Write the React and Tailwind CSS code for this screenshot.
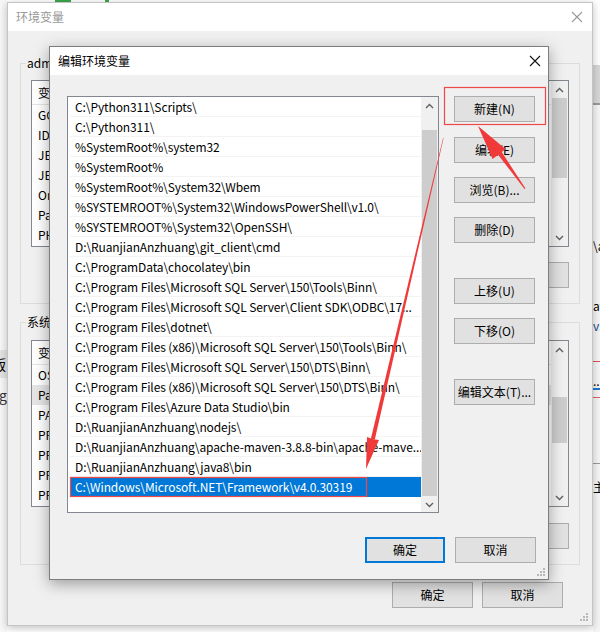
import React from "react";

const FONT = "font-['Noto_Sans_CJK_SC','Noto_Sans',sans-serif]";

const paths = [
  "C:\\Python311\\Scripts\\",
  "C:\\Python311\\",
  "%SystemRoot%\\system32",
  "%SystemRoot%",
  "%SystemRoot%\\System32\\Wbem",
  "%SYSTEMROOT%\\System32\\WindowsPowerShell\\v1.0\\",
  "%SYSTEMROOT%\\System32\\OpenSSH\\",
  "D:\\RuanjianAnzhuang\\git_client\\cmd",
  "C:\\ProgramData\\chocolatey\\bin",
  "C:\\Program Files\\Microsoft SQL Server\\150\\Tools\\Binn\\",
  "C:\\Program Files\\Microsoft SQL Server\\Client SDK\\ODBC\\17...",
  "C:\\Program Files\\dotnet\\",
  "C:\\Program Files (x86)\\Microsoft SQL Server\\150\\Tools\\Binn\\",
  "C:\\Program Files\\Microsoft SQL Server\\150\\DTS\\Binn\\",
  "C:\\Program Files (x86)\\Microsoft SQL Server\\150\\DTS\\Binn\\",
  "C:\\Program Files\\Azure Data Studio\\bin",
  "D:\\RuanjianAnzhuang\\nodejs\\",
  "D:\\RuanjianAnzhuang\\apache-maven-3.8.8-bin\\apache-mave...",
  "D:\\RuanjianAnzhuang\\java8\\bin",
];
const selectedPath = "C:\\Windows\\Microsoft.NET\\Framework\\v4.0.30319";

const userVars = ["GOPATH", "IDEA_HOME", "JENKINS_HOME", "JETBRAINS", "OneDrive", "Path", "PHP_HOME"];
const sysVars = ["OS", "Path", "PATHEXT", "PROCESSOR_ARCHITECTURE", "PROCESSOR_IDENTIFIER", "PROCESSOR_LEVEL", "PROCESSOR_REVISION"];

function Btn({ children, className = "", primary = false }) {
  return (
    <div
      className={`flex items-center justify-center h-[26px] bg-[#e1e1e1] text-[12px] text-black leading-none ${
        primary ? "border-2 border-[#0078d7]" : "border border-[#adadad]"
      } ${className}`}
    >
      {children}
    </div>
  );
}

function ChevUp() {
  return (
    <svg width="9" height="6" viewBox="0 0 9 6">
      <path d="M1 5 L4.5 1.5 L8 5" fill="none" stroke="#606060" strokeWidth="1.4" />
    </svg>
  );
}
function ChevDown() {
  return (
    <svg width="9" height="6" viewBox="0 0 9 6">
      <path d="M1 1 L4.5 4.5 L8 1" fill="none" stroke="#606060" strokeWidth="1.4" />
    </svg>
  );
}

function Scrollbar({ thumbTop, thumbHeight }) {
  return (
    <div className="w-[17px] h-full flex flex-col bg-[#f0f0f0]">
      <div className="h-[17px] flex items-center justify-center shrink-0">
        <ChevUp />
      </div>
      <div className="flex-1 relative">
        <div className="mx-[1px] bg-[#cdcdcd]" style={{ marginTop: thumbTop, height: thumbHeight }} />
      </div>
      <div className="h-[17px] flex items-center justify-center shrink-0">
        <ChevDown />
      </div>
    </div>
  );
}

function Grip() {
  return (
    <svg width="10" height="10" viewBox="0 0 10 10">
      <rect x="7" y="1" width="2" height="2" fill="#b8b8b8" />
      <rect x="4" y="4" width="2" height="2" fill="#b8b8b8" />
      <rect x="7" y="4" width="2" height="2" fill="#b8b8b8" />
      <rect x="1" y="7" width="2" height="2" fill="#b8b8b8" />
      <rect x="4" y="7" width="2" height="2" fill="#b8b8b8" />
      <rect x="7" y="7" width="2" height="2" fill="#b8b8b8" />
    </svg>
  );
}

function VarList({ vars, highlight, thumbTop, thumbHeight }) {
  return (
    <div className="h-[167px] border border-[#828790] bg-white flex">
      <div className="flex-1 flex flex-col overflow-hidden">
        <div className="h-[24px] flex items-center pl-[6px] text-[12px] text-black border-b border-[#e5e5e5]">
          <span className="w-[120px]">变量</span>
          <span>值</span>
        </div>
        {vars.map((v, i) => (
          <div
            key={i}
            className={`h-[20px] flex items-center pl-[6px] text-[12px] text-black whitespace-nowrap ${
              highlight === i ? "bg-[#e5e5e5]" : ""
            }`}
          >
            {v}
          </div>
        ))}
      </div>
      <Scrollbar thumbTop={thumbTop} thumbHeight={thumbHeight} />
    </div>
  );
}

function CloseX({ color, size }) {
  return (
    <svg width={size} height={size} viewBox="0 0 12 12">
      <path d="M1 1 L11 11 M11 1 L1 11" stroke={color} strokeWidth="1.1" fill="none" />
    </svg>
  );
}

function BackWindow() {
  return (
    <div className="absolute left-[7px] top-[2px] w-[586px] h-[624px] border border-[#c4c4c4] bg-[#f0f0f0] flex flex-col shadow-[0_2px_8px_rgba(0,0,0,0.25)]">
      <div className="h-[28px] bg-white flex items-center justify-between pl-[8px] pr-[9px] shrink-0">
        <span className="text-[12px] text-[#999999]">环境变量</span>
        <CloseX color="#9a9a9a" size={12} />
      </div>
      <div className="flex flex-col px-[12px] pt-[24px]">
        <fieldset className="border border-[#dcdcdc] px-[10px] pt-[9px] pb-[15px]">
          <legend className="text-[12px] leading-[16px] text-black -ml-[5px] px-[1px]">admin 的用户变量(U)</legend>
          <VarList vars={userVars} thumbTop={0} thumbHeight={80} />
          <div className="flex justify-end gap-[9px] mt-[15px]">
            <Btn className="w-[81px]">新建(N)...</Btn>
            <Btn className="w-[81px]">编辑(E)...</Btn>
            <Btn className="w-[81px]">删除(D)</Btn>
          </div>
        </fieldset>
        <fieldset className="mt-[10px] border border-[#dcdcdc] px-[10px] pt-[10px] pb-[15px]">
          <legend className="text-[12px] leading-[16px] text-black -ml-[5px] px-[1px]">系统变量(S)</legend>
          <VarList vars={sysVars} highlight={1} thumbTop={39} thumbHeight={46} />
          <div className="flex justify-end gap-[9px] mt-[16px]">
            <Btn className="w-[81px]">新建(W)...</Btn>
            <Btn className="w-[81px]">编辑(I)...</Btn>
            <Btn className="w-[81px]">删除(L)</Btn>
          </div>
        </fieldset>
        <div className="flex justify-end gap-[9px] mt-[17px] pr-[17px]">
          <Btn className="w-[81px] h-[25px]">确定</Btn>
          <Btn className="w-[81px] h-[25px]">取消</Btn>
        </div>
      </div>
      <div className="absolute right-[3px] bottom-[3px]">
        <Grip />
      </div>
    </div>
  );
}

function Dialog() {
  return (
    <div className="absolute left-[49px] top-[46px] w-[500px] h-[534px] border border-[#7d7d7d] bg-[#f0f0f0] flex flex-col shadow-[0_4px_14px_rgba(0,0,0,0.35)]">
      <div className="h-[28px] bg-white flex items-center justify-between pl-[8px] pr-[7px] shrink-0">
        <span className="text-[12px] text-black">编辑环境变量</span>
        <CloseX color="#111111" size={12} />
      </div>
      <div className="flex pl-[17px] pr-[12px] pt-[21px]">
        <div className="w-[372px] h-[417px] border border-[#828790] bg-white flex">
          <div className="flex-1 flex flex-col pl-[2px] overflow-hidden">
            {paths.map((p, i) => (
              <div
                key={i}
                className="h-[20px] flex items-center px-[5px] border-b border-[#f3f3f3] text-[12px] tracking-[-0.1px] text-black whitespace-nowrap overflow-hidden"
              >
                {p}
              </div>
            ))}
            <div className="h-[20px] flex items-center px-[5px] bg-[#0078d7] text-[12px] tracking-[-0.1px] text-white whitespace-nowrap">
              {selectedPath}
            </div>
          </div>
          <Scrollbar thumbTop={16} thumbHeight={366} />
        </div>
        <div className="ml-[15px] w-[81px] flex flex-col">
          <Btn>新建(N)</Btn>
          <Btn className="mt-[15px]">编辑(E)</Btn>
          <Btn className="mt-[14px]">浏览(B)...</Btn>
          <Btn className="mt-[14px]">删除(D)</Btn>
          <Btn className="mt-[35px]">上移(U)</Btn>
          <Btn className="mt-[14px]">下移(O)</Btn>
          <Btn className="mt-[35px]">编辑文本(T)...</Btn>
        </div>
      </div>
      <div className="flex justify-end gap-[10px] pr-[12px] mt-[24px]">
        <Btn primary className="w-[80px] h-[26px]">确定</Btn>
        <Btn className="w-[81px] h-[26px]">取消</Btn>
      </div>
      <div className="absolute right-[2px] bottom-[2px]">
        <Grip />
      </div>
    </div>
  );
}

function Annotations() {
  return (
    <svg className="absolute left-0 top-0 pointer-events-none" width="600" height="632" viewBox="0 0 600 632">
      <rect x="444.5" y="87.5" width="101" height="37" fill="none" stroke="#f04848" strokeWidth="1.2" />
      <rect x="70.5" y="477.5" width="296" height="19" fill="none" stroke="#f04848" strokeWidth="1.2" />
      <polygon points="478,126 492.5,159 498,155 505.5,149" fill="#f03a3a" />
      <polygon points="497.5,154 501,151 525.5,188.5 524.5,189" fill="#f03a3a" />
      <polygon points="366,469 367,437 372.5,439 379,440" fill="#f03a3a" />
      <polygon points="370.8,439 374.8,439.6 443.6,138 443.1,138" fill="#f03a3a" />
    </svg>
  );
}

function SideStrips() {
  return (
    <>
      <div className="absolute left-0 top-0 w-[7px] h-[632px] bg-[#f7f7f7] overflow-hidden">
        <div className="mt-[350px] h-[28px] bg-[#e3e3e3] flex items-center">
          <span className="text-[14px] text-black -ml-[8px]">版</span>
        </div>
        <div className="mt-[10px] text-[14px] text-[#333] -ml-[1px] leading-[14px]">g</div>
      </div>
      <div className="absolute left-[593px] top-0 w-[7px] h-[632px] bg-[#f5f5f5] overflow-hidden flex flex-col">
        <div className="h-[65px] bg-white shrink-0" />
        <div className="h-[38px] bg-[#d7d7d7] shrink-0" />
        <div className="h-[2px] bg-[#9a9a9a] shrink-0" />
        <div className="mt-[134px] text-[12px] leading-[14px] text-black">\a</div>
        <div className="mt-[46px] text-[12px] leading-[14px] text-black">av</div>
        <div className="mt-[6px] text-[12px] leading-[14px] text-[#1a4f8a]">vs</div>
        <div className="mt-[28px] h-[1px] bg-[#e05050] shrink-0" />
        <div className="mt-[16px] text-[12px] leading-[6px] text-black">..</div>
        <div className="mt-[4px] h-[2px] bg-[#1e78d0] shrink-0" />
        <div className="mt-[7px] h-[1px] bg-[#e06060] shrink-0" />
        <div className="mt-[65px] h-[1px] bg-[#9a9a9a] shrink-0" />
        <div className="mt-[16px] text-[12px] leading-[14px] text-black">主</div>
      </div>
      <div className="absolute left-[55px] top-0 w-[16px] h-[2px] bg-[#3aa64a]" />
      <div className="absolute left-[105px] top-0 w-[4px] h-[2px] bg-[#3aa64a]" />
    </>
  );
}

export default function App() {
  return (
    <div className={`relative w-[600px] h-[632px] overflow-hidden bg-white ${FONT}`}>
      <SideStrips />
      <BackWindow />
      <Dialog />
      <Annotations />
    </div>
  );
}
